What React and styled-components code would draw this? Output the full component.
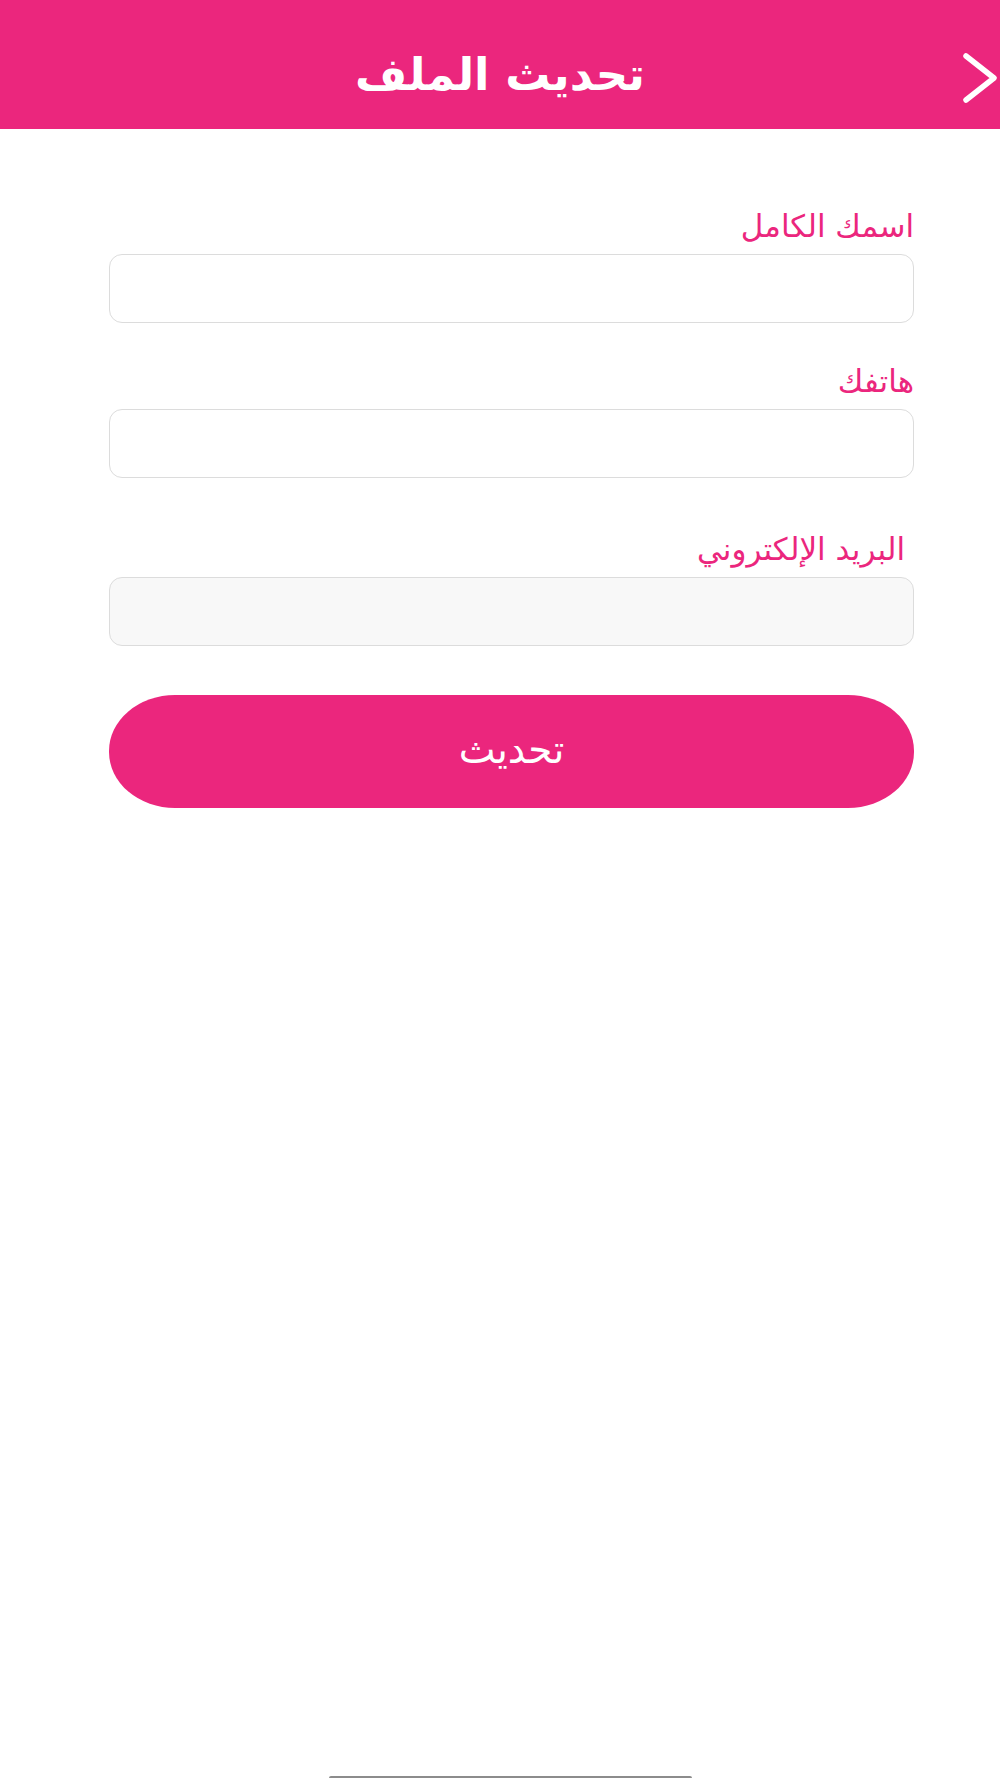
import React, { useState } from 'react';
import styled, { createGlobalStyle } from 'styled-components';

const GlobalStyle = createGlobalStyle`
  html, body {
    margin: 0;
    padding: 0;
    background: #ffffff;
  }
  body {
    font-family: "DejaVu Sans", sans-serif;
  }
`;

const Page = styled.div`
  direction: rtl;
  width: 1000px;
  height: 1778px;
  position: relative;
  display: flex;
  flex-direction: column;
  background: #ffffff;
  overflow: hidden;
`;

const Header = styled.header`
  position: relative;
  height: 129px;
  background: #eb267d;
  display: flex;
  align-items: center;
  justify-content: center;
`;

const Title = styled.h1`
  margin: 0;
  padding-top: 20px;
  color: #ffffff;
  font-family: "DejaVu Sans", sans-serif;
  font-weight: bold;
  font-size: 45px;
  line-height: 1;
`;

const BackButton = styled.button`
  position: absolute;
  right: 0;
  top: 52px;
  width: 40px;
  height: 52px;
  padding: 0;
  border: none;
  background: transparent;
  cursor: pointer;
`;

const Form = styled.form`
  display: flex;
  flex-direction: column;
  margin: 0 86px 0 109px;
  padding-top: 79px;
`;

const Field = styled.div`
  display: flex;
  flex-direction: column;
  margin-bottom: ${(p) => p.$gap}px;
`;

const Label = styled.label`
  color: #eb267d;
  font-size: 31px;
  line-height: 36px;
  margin-bottom: 10px;
  padding-right: ${(p) => p.$indent || 0}px;
`;

const Input = styled.input`
  box-sizing: border-box;
  height: 69px;
  width: 100%;
  border: 1.5px solid #dcdcdc;
  border-radius: 13px;
  background: ${(p) => (p.$disabled ? '#f8f8f8' : '#ffffff')};
  font-family: inherit;
  font-size: 24px;
  padding: 0 16px;
  outline: none;
`;

const SubmitButton = styled.button`
  height: 113px;
  width: 100%;
  border: none;
  border-radius: 66px / 56px;
  background: #eb267d;
  color: #ffffff;
  font-family: "DejaVu Sans", sans-serif;
  font-size: 39px;
  cursor: pointer;
  padding: 0 0 4px;
`;

const HomeIndicator = styled.div`
  position: absolute;
  bottom: 0;
  left: 329px;
  width: 363px;
  height: 2px;
  border-radius: 2px 2px 0 0;
  background: #8c8c8c;
`;

const fields = [
  { key: 'name', label: 'اسمك الكامل', gap: 40 },
  { key: 'phone', label: 'هاتفك', gap: 53 },
  { key: 'email', label: 'البريد الإلكتروني', gap: 49, indent: 9, disabled: true },
];

const App = () => {
  const [values, setValues] = useState({ name: '', phone: '', email: '' });

  return (
    <>
      <GlobalStyle />
      <Page>
        <Header>
          <Title>تحديث الملف</Title>
          <BackButton aria-label="back">
            <svg width="40" height="52" viewBox="0 0 40 52" fill="none">
              <path
                d="M6 4 L34 26 L6 48"
                stroke="#ffffff"
                strokeWidth="5.5"
                strokeLinecap="round"
                strokeLinejoin="round"
              />
            </svg>
          </BackButton>
        </Header>
        <Form onSubmit={(e) => e.preventDefault()}>
          {fields.map((f) => (
            <Field key={f.key} $gap={f.gap}>
              <Label $indent={f.indent}>{f.label}</Label>
              <Input
                $disabled={f.disabled}
                readOnly={f.disabled}
                value={values[f.key]}
                onChange={(e) => setValues({ ...values, [f.key]: e.target.value })}
              />
            </Field>
          ))}
          <SubmitButton type="submit">تحديث</SubmitButton>
        </Form>
        <HomeIndicator />
      </Page>
    </>
  );
};

export default App;
